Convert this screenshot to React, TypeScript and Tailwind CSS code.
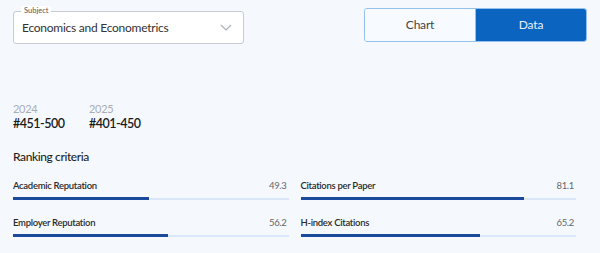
import React from 'react';

const CRITERIA = [
  { label: 'Academic Reputation', value: '49.3', pct: 49.3 },
  { label: 'Citations per Paper', value: '81.1', pct: 81.1 },
  { label: 'Employer Reputation', value: '56.2', pct: 56.2 },
  { label: 'H-index Citations', value: '65.2', pct: 65.2 },
];

export default function App() {
  return (
    <div
      className="w-[600px] h-[253px] overflow-hidden bg-[#f5f9fe] text-[#222]"
      style={{ fontFamily: 'Lato, "Noto Sans", sans-serif' }}
    >
      <div className="flex items-start justify-between pl-[13px] pr-[13px]">
        <div className="relative mt-[11px] w-[231px] h-[33px] bg-white border border-[#c8ccd2] rounded-[3px] flex items-center pl-[8px] pr-[10px]">
          <span className="absolute -top-[6px] left-[7px] px-[3px] bg-white text-[7.5px] leading-[10px] text-[#555]">
            Subject
          </span>
          <span className="flex-1 pt-[1px] text-[12px] tracking-[-0.25px] text-[#333]">Economics and Econometrics</span>
          <svg width="12" height="7" viewBox="0 0 12 7" fill="none" className="mr-[1px]">
            <path d="M1 1l5 5 5-5" stroke="#aab0b8" strokeWidth="1.2" />
          </svg>
        </div>
        <div className="mt-[8px] flex w-[223px] h-[34px] border border-[#93c0ec] rounded-[3px] overflow-hidden">
          <div className="flex-1 flex items-center justify-center bg-[#f7faff] text-[12px] tracking-[-0.2px] text-[#444]">
            Chart
          </div>
          <div className="flex-1 flex items-center justify-center bg-[#0b64c0] text-[12px] tracking-[-0.2px] text-[#e6f0fb] border-l border-[#93c0ec]">
            Data
          </div>
        </div>
      </div>

      <div className="pl-[13px] mt-[58px] flex">
        <div className="w-[76px]">
          <div className="text-[11px] leading-[14px] tracking-[-0.3px] text-[#a9adb3]">2024</div>
          <div className="text-[12.5px] leading-[16px] tracking-[-0.5px] font-semibold text-[#1b1b1b]">#451-500</div>
        </div>
        <div>
          <div className="text-[11px] leading-[14px] tracking-[-0.3px] text-[#a9adb3]">2025</div>
          <div className="text-[12.5px] leading-[16px] tracking-[-0.5px] font-semibold text-[#1b1b1b]">#401-450</div>
        </div>
      </div>

      <div className="pl-[13px] mt-[17px] text-[12px] leading-[16px] tracking-[-0.4px] font-medium text-[#1f1f1f]">
        Ranking criteria
      </div>

      <div className="pl-[13px] pr-[24px] mt-[14px] grid grid-cols-2 gap-x-[12px] gap-y-[16px]">
        {CRITERIA.map((c) => (
          <div key={c.label}>
            <div className="flex justify-between items-end pr-[2px] text-[9.5px] leading-[13px] tracking-[-0.3px]">
              <span className="font-semibold text-[#2a2a2a]">{c.label}</span>
              <span className="text-[#666]">{c.value}</span>
            </div>
            <div className="relative mt-[5px] h-[3px]">
              <div className="absolute left-0 right-0 top-[1px] h-[2px] bg-[#dae7f8]" />
              <div className="absolute left-0 top-0 h-[3px] bg-[#1b4a9d]" style={{ width: `${c.pct}%` }} />
            </div>
          </div>
        ))}
      </div>
    </div>
  );
}
